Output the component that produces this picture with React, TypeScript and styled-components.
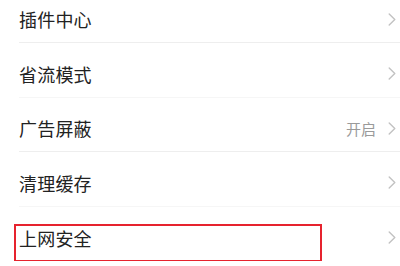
import * as React from 'react'
import styled, { createGlobalStyle } from 'styled-components'

const GlobalStyle = createGlobalStyle`
  html, body {
    margin: 0;
    padding: 0;
    background: #fff;
    overflow: hidden;
  }
  body {
    font-family: "Noto Sans CJK SC", "Noto Sans", sans-serif;
  }
`

const List = styled.ul`
  list-style: none;
  margin: -11.5px 0 0 19px;
  padding: 0;
`

const Row = styled.li<{ faint?: boolean, last?: boolean }>`
  position: relative;
  display: flex;
  align-items: center;
  height: 54.5px;
  box-sizing: border-box;
  padding: 8px 4px 0 0;
  border-bottom: 1px solid ${props => props.faint ? '#f6f6f6' : '#eeeeee'};

  ${props => props.last && `
    border-bottom: 0;
  `}
`

const Label = styled.span`
  flex: 1;
  font-size: 18px;
  color: #222;
  letter-spacing: 0.2px;
`

const Value = styled.span`
  font-size: 15px;
  color: #9a9a9a;
  margin-right: 12px;
`

const Chevron = styled.svg`
  width: 8px;
  height: 13px;
  flex: none;
`

const Highlight = styled.div`
  position: absolute;
  left: -5px;
  top: 17.5px;
  width: 308px;
  height: 37.5px;
  box-sizing: border-box;
  border: 2px solid #e6232e;
`

interface Item {
  label: string
  value?: string
  faint?: boolean
  highlight?: boolean
}

const items: Item[] = [
  { label: '插件中心' },
  { label: '省流模式', faint: true },
  { label: '广告屏蔽', value: '开启' },
  { label: '清理缓存', faint: true },
  { label: '上网安全', highlight: true },
]

function Arrow () {
  return (
    <Chevron viewBox="0 0 8 13">
      <polyline
        points="1.2,1 6.8,6.5 1.2,12"
        fill="none"
        stroke="#c2c2c2"
        strokeWidth="1.4"
        strokeLinecap="round"
        strokeLinejoin="round"
      />
    </Chevron>
  )
}

export default function App () {
  return (
    <>
      <GlobalStyle />
      <List>
        {items.map((item, i) => (
          <Row key={item.label} faint={item.faint} last={i === items.length - 1}>
            <Label>{item.label}</Label>
            {item.value && <Value>{item.value}</Value>}
            <Arrow />
            {item.highlight && <Highlight />}
          </Row>
        ))}
      </List>
    </>
  )
}
